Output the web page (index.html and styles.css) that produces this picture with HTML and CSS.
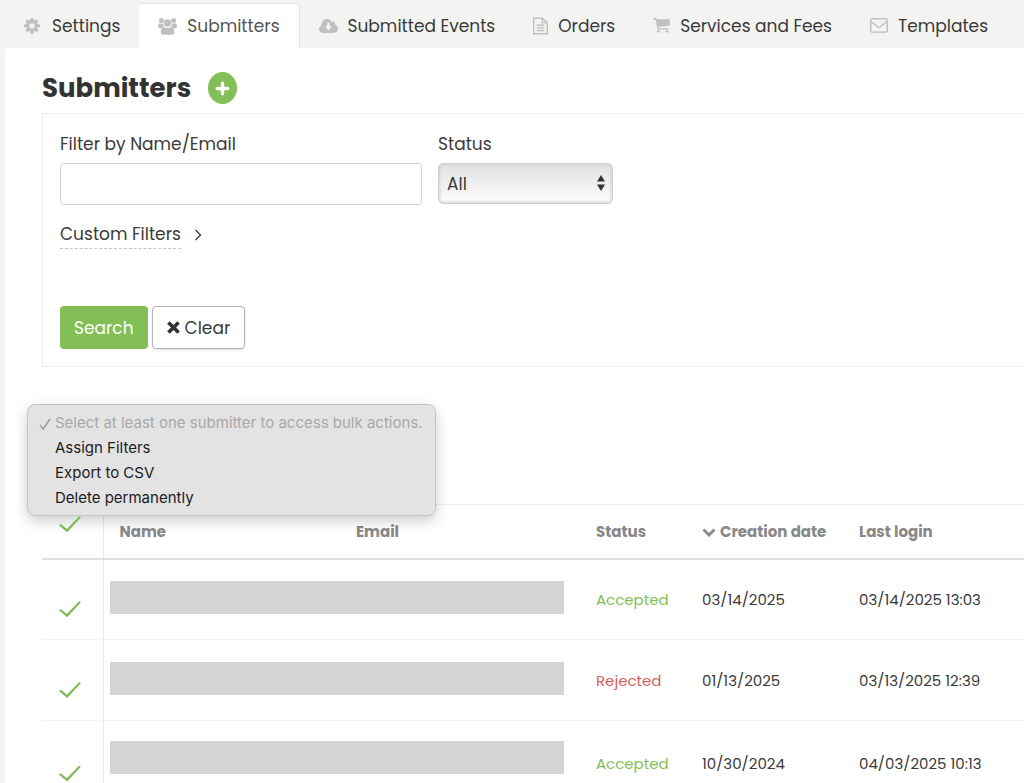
FILE: index.html
```
<!DOCTYPE html>
<html lang="en">
<head>
<meta charset="UTF-8">
<title>Submitters</title>
<link rel="stylesheet" href="styles.css">
</head>
<body>
    <nav class="tabs">
        <a href="#" class="tab tab-settings">
            <svg class="icon" width="16" height="16" viewBox="0 0 16 16"><path fill-rule="evenodd" d="M6.8 0h2.4l.4 2.1 1.2.5L12.600 1.400l1.700 1.700L13.200 4.900l.5 1.200 2.300.5v2.500l-2.200.4-.5 1.200 1.200 1.900-1.700 1.700-1.900-1.200-1.200.5L9.200 16H6.800l-.4-2.400-1.200-.5-1.900 1.200-1.700-1.700 1.200-1.900-.5-1.200L0 9.100V6.600l2.200-.4.5-1.200-1.200-1.900 1.700-1.700 1.900 1.200 1.200-.5zM8 5.200a2.700 2.700 0 1 0 0 5.400 2.700 2.700 0 0 0 0-5.400z"/></svg>
            Settings
        </a>
        <a href="#" class="tab active">
            <svg class="icon" width="19" height="17" viewBox="0 0 19 17"><circle cx="3.400" cy="2.600" r="2.500"/><circle cx="15.600" cy="2.600" r="2.500"/><circle cx="9.500" cy="5" r="3.700"/><path d="M1.500 5.300c1.200.6 2.600.6 3.600 0 0 1.500.3 2.700 1.100 3.600-1.200 0-2 .4-2.700 1.300H1.700C.6 10.200 0 9.500 0 8.400 0 7.200.4 6 1.500 5.300zM17.500 5.300c-1.200.6-2.600.6-3.600 0 0 1.500-.3 2.700-1.100 3.600 1.200 0 2 .4 2.700 1.300h1.800c1.100 0 1.700-.7 1.700-1.800 0-1.200-.4-2.400-1.500-3.100z"/><path d="M5.800 9.100c2.300 1.300 5.100 1.300 7.400 0 2.400.3 3 2.900 3 5.200 0 1.600-1 2.500-2.400 2.500H5.200c-1.400 0-2.400-.9-2.400-2.500 0-2.300.6-4.900 3-5.200z"/></svg>
            Submitters
        </a>
        <a href="#" class="tab">
            <svg class="icon" width="19" height="14" viewBox="0 0 19 14"><path fill-rule="evenodd" d="M4.300 14C1.800 14 0 12.200 0 9.900c0-1.700 1-3 2.500-3.700C2.300 2.500 4.700 0 7.800 0c2.200 0 3.900 1.200 4.700 3 2-.9 4 .5 3.700 2.700 1.700.5 2.800 2 2.800 3.900 0 2.500-1.900 4.400-4.300 4.400zM8.200 3.700v3.500H5.700l3.800 4.300 3.800-4.300h-2.500V3.700z"/></svg>
            Submitted Events
        </a>
        <a href="#" class="tab">
            <svg class="icon icon-line" width="15" height="18" viewBox="0 0 15 18"><path d="M.7 1.200h8.800l4.800 4.500v11.100H.7zM9.300 1.200v4.700h5M3.800 8.300h7.400M3.800 10.900h7.400M3.800 13.500h7.400"/></svg>
            Orders
        </a>
        <a href="#" class="tab">
            <svg class="icon" width="17" height="15" viewBox="0 0 17 15"><path d="M0 .8C0 .3.300 0 .7 0h2c.7 0 .9.500 1 1.300H16c.5 0 .8.300.8.700V7c0 .400-.300.700-.700.700L5.400 9l.2 1.200h9.200c.9 0 .9 1.300 0 1.300H4.700c-.6 0-.9-.5-.7-1l.2-.8L2.500 1.400H.8C.3 1.400 0 1.200 0 .8z"/><circle cx="5.500" cy="13.300" r="1.400"/><circle cx="14" cy="13.300" r="1.400"/></svg>
            Services and Fees
        </a>
        <a href="#" class="tab">
            <svg class="icon icon-line" width="18" height="15" viewBox="0 0 18 15"><rect x=".7" y=".7" width="16.600" height="13.400" rx="1.500"/><path d="M1 3.500l6.300 5c1 .8 2.400.8 3.400 0l6.300-5"/></svg>
            Templates
        </a>
    </nav>

    <main class="content">
        <div class="title">
            <h1>Submitters</h1>
            <button type="button" class="add-button" aria-label="Add submitter">
                <svg width="15" height="15" viewBox="0 0 15 15"><path d="M7.500 2.200v10.600M2.200 7.500h10.600" stroke="#fff" stroke-width="3.400" stroke-linecap="round"/></svg>
            </button>
        </div>

        <form class="filters">
            <div class="fields">
                <div class="field field-name">
                    <label for="name">Filter by Name/Email</label>
                    <input type="text" id="name">
                </div>
                <div class="field field-status">
                    <label for="status">Status</label>
                    <div class="select-wrap">
                        <select id="status">
                            <option>All</option>
                            <option>Accepted</option>
                            <option>Rejected</option>
                        </select>
                        <svg class="arrows" width="8" height="16" viewBox="0 0 8 16"><path d="M4 0l4 6.600H0zM4 16l4-6.600H0z"/></svg>
                    </div>
                </div>
            </div>
            <a href="#" class="custom-filters">
                <span>Custom Filters</span>
                <svg width="8" height="12" viewBox="0 0 8 12"><path d="M1.500 1l5 5-5 5" fill="none" stroke="#3a3a3a" stroke-width="1.300"/></svg>
            </a>
            <div class="buttons">
                <button type="submit" class="button button-search">Search</button>
                <button type="reset" class="button button-clear">
                    <svg width="13" height="13" viewBox="0 0 13 13"><path d="M2.700 2.700l7.600 7.600M10.300 2.700l-7.600 7.600" stroke="#333" stroke-width="3.600" stroke-linecap="square"/></svg>
                    Clear
                </button>
            </div>
        </form>

        <div class="bulk">
            <div class="bulk-menu">
                <svg class="bulk-check" width="12" height="12" viewBox="0 0 12 12"><path d="M1 7l3.200 4L11 1" fill="none" stroke="#a4a4a4" stroke-width="1.800"/></svg>
                <select size="4" class="bulk-list" aria-label="Bulk actions">
                    <option disabled>Select at least one submitter to access bulk actions.</option>
                    <option>Assign Filters</option>
                    <option>Export to CSV</option>
                    <option>Delete permanently</option>
                </select>
            </div>
        </div>

        <table class="submitters">
            <colgroup>
                <col class="col-check">
                <col class="col-name">
                <col class="col-email">
                <col class="col-status">
                <col class="col-created">
                <col>
            </colgroup>
            <thead>
                <tr>
                    <th class="check-cell"><input type="checkbox" class="check" aria-label="Select all"></th>
                    <th>Name</th>
                    <th>Email</th>
                    <th>Status</th>
                    <th><svg class="sort" width="14" height="9" viewBox="0 0 14 9"><path d="M1.500 1.500L7 7l5.500-5.500" fill="none" stroke="#888" stroke-width="2.800"/></svg>Creation date</th>
                    <th>Last login</th>
                </tr>
            </thead>
            <tbody>
                <tr>
                    <td class="check-cell"><input type="checkbox" class="check" aria-label="Select row 1"></td>
                    <td colspan="2" class="hidden-cell"><div class="hidden-data"></div></td>
                    <td class="accepted">Accepted</td>
                    <td>03/14/2025</td>
                    <td>03/14/2025 13:03</td>
                </tr>
                <tr>
                    <td class="check-cell"><input type="checkbox" class="check" aria-label="Select row 2"></td>
                    <td colspan="2" class="hidden-cell"><div class="hidden-data"></div></td>
                    <td class="rejected">Rejected</td>
                    <td>01/13/2025</td>
                    <td>03/13/2025 12:39</td>
                </tr>
                <tr class="tall">
                    <td class="check-cell"><input type="checkbox" class="check" aria-label="Select row 3"></td>
                    <td colspan="2" class="hidden-cell"><div class="hidden-data"></div></td>
                    <td class="accepted">Accepted</td>
                    <td>10/30/2024</td>
                    <td>04/03/2025 10:13</td>
                </tr>
            </tbody>
        </table>
    </main>
</body>
</html>
```
FILE: styles.css
```
* {
    box-sizing: border-box;
}

body {
    margin: 0;
    height: 100vh;
    overflow: hidden;
    background-color: #f3f3f1;
    color: #3a3a3a;
    font-family: Poppins, Inter, sans-serif;
    font-size: 17px;
}

button, input, select {
    font: inherit;
    color: inherit;
}

.tabs {
    display: flex;
    height: 48px;
    padding: 3px 0 0 5px;
}

.tab {
    display: flex;
    align-items: center;
    gap: 10px;
    padding: 0 19px;
    color: #3a3a3a;
    text-decoration: none;
    white-space: nowrap;
}

.tab-settings {
    gap: 12px;
}

.tab.active {
    background-color: #fff;
    border: 1px solid #e2e2e2;
    border-width: 1px 1px 0 0;
    border-radius: 4px 4px 0 0;
    color: #555;
}

.icon {
    fill: #c0c0c0;
    flex-shrink: 0;
}

.icon-line {
    fill: none;
    stroke: #c0c0c0;
    stroke-width: 1.4;
}

.content {
    margin-left: 5px;
    padding: 20px 0 0 37px;
    background-color: #fff;
    border-radius: 4px 0 0 0;
}

.title {
    display: flex;
    align-items: center;
    gap: 17px;
    height: 40px;
}

h1 {
    margin: 0;
    font-size: 26px;
    line-height: 40px;
    color: #333;
}

.add-button {
    display: flex;
    align-items: center;
    justify-content: center;
    width: 29px;
    height: 32px;
    padding: 0;
    border: 0;
    border-radius: 50%;
    background-color: #82bf56;
}

.filters {
    margin-top: 5px;
    padding: 18px 17px 17px;
    border: 1px solid #ebebeb;
    border-right: 0;
}

.fields {
    display: flex;
    gap: 16px;
}

.field-name {
    width: 362px;
}

.field-status {
    width: 175px;
}

.field label {
    display: block;
    margin-bottom: 7px;
    line-height: 24px;
}

.field input {
    display: block;
    width: 100%;
    height: 42px;
    padding: 0 10px;
    border: 1px solid #d0d2d2;
    border-radius: 4px;
}

.select-wrap {
    position: relative;
}

.select-wrap select {
    display: block;
    appearance: none;
    width: 100%;
    height: 41px;
    padding: 0 28px 0 8px;
    border: 1px solid #cfcfcf;
    border-radius: 5px;
    background: linear-gradient(#e1e1e1, #fdfdfd);
    box-shadow: inset 0 0 3px 1px #d2d2d2;
}

.arrows {
    position: absolute;
    right: 8px;
    top: 12px;
    fill: #333;
    pointer-events: none;
}

.custom-filters {
    display: inline-flex;
    align-items: center;
    gap: 13px;
    margin-top: 16px;
    color: #3a3a3a;
    text-decoration: none;
}

.custom-filters span {
    border-bottom: 1px dashed #c4c4c4;
    line-height: 27px;
}

.buttons {
    display: flex;
    gap: 4px;
    margin-top: 57px;
}

.button {
    height: 43px;
    padding: 0 14px;
    border: 0;
    border-radius: 4px;
}

.button-search {
    background-color: #82bf56;
    color: #fff;
}

.button-clear {
    display: flex;
    align-items: center;
    gap: 5px;
    border: 1px solid #b4b4b4;
    background-color: #fff;
    box-shadow: 0 1px 3px rgba(0, 0, 0, 0.12);
}

.bulk {
    position: relative;
    height: 137px;
}

.bulk-menu {
    position: absolute;
    left: -15px;
    top: 37px;
    width: 409px;
    padding: 8px 0 2px;
    border: 1px solid #c4c4c4;
    border-radius: 8px;
    background-color: #e3e3e3;
    box-shadow: 0 5px 14px rgba(0, 0, 0, 0.2);
}

.bulk-check {
    position: absolute;
    left: 11px;
    top: 13px;
}

.bulk-list {
    display: block;
    width: 100%;
    height: 100px;
    padding: 0;
    border: 0;
    outline: 0;
    overflow: hidden;
    background: none;
    color: #1c1c1c;
    font-family: Inter, sans-serif;
    font-size: 15px;
}

.bulk-list option {
    min-height: 25px;
    padding: 0 0 0 27px;
    line-height: 25px;
}

.bulk-list option:disabled {
    color: #a8a8a8;
}

.submitters {
    width: 100%;
    table-layout: fixed;
    border-collapse: collapse;
    border-top: 1px solid #eee;
    font-size: 15px;
}

.col-check {
    width: 61px;
}

.col-name {
    width: 237px;
}

.col-email {
    width: 240px;
}

.col-status {
    width: 106px;
}

.col-created {
    width: 157px;
}

.submitters th {
    height: 54px;
    padding: 0 16px;
    border-bottom: 2px solid #dfe0e0;
    color: #888;
    text-align: left;
    white-space: nowrap;
}

.sort {
    margin-right: 4px;
}

.submitters td {
    height: 81px;
    padding: 0 16px;
    border-bottom: 1px solid #f2f2f2;
    white-space: nowrap;
}

.submitters .tall td {
    height: 86px;
}

.submitters .check-cell {
    padding: 0 0 0 17px;
    border-right: 1px solid #e8e8e8;
}

.check {
    display: block;
    appearance: none;
    width: 22px;
    height: 16px;
    margin: 20px 0 0;
    background-color: #7fb956;
    clip-path: polygon(0 56%, 8% 49%, 36% 80%, 92% 0, 100% 6%, 37% 100%);
}

th .check {
    margin: 0 0 14px;
}

.submitters .hidden-cell {
    padding: 0 16px 0 6px;
}

.hidden-data {
    height: 33px;
    margin-bottom: 4px;
    background-color: #d5d5d5;
}

.tall .hidden-data {
    margin-bottom: 12px;
}

.accepted {
    color: #82bf56;
}

.rejected {
    color: #d0605a;
}
```
